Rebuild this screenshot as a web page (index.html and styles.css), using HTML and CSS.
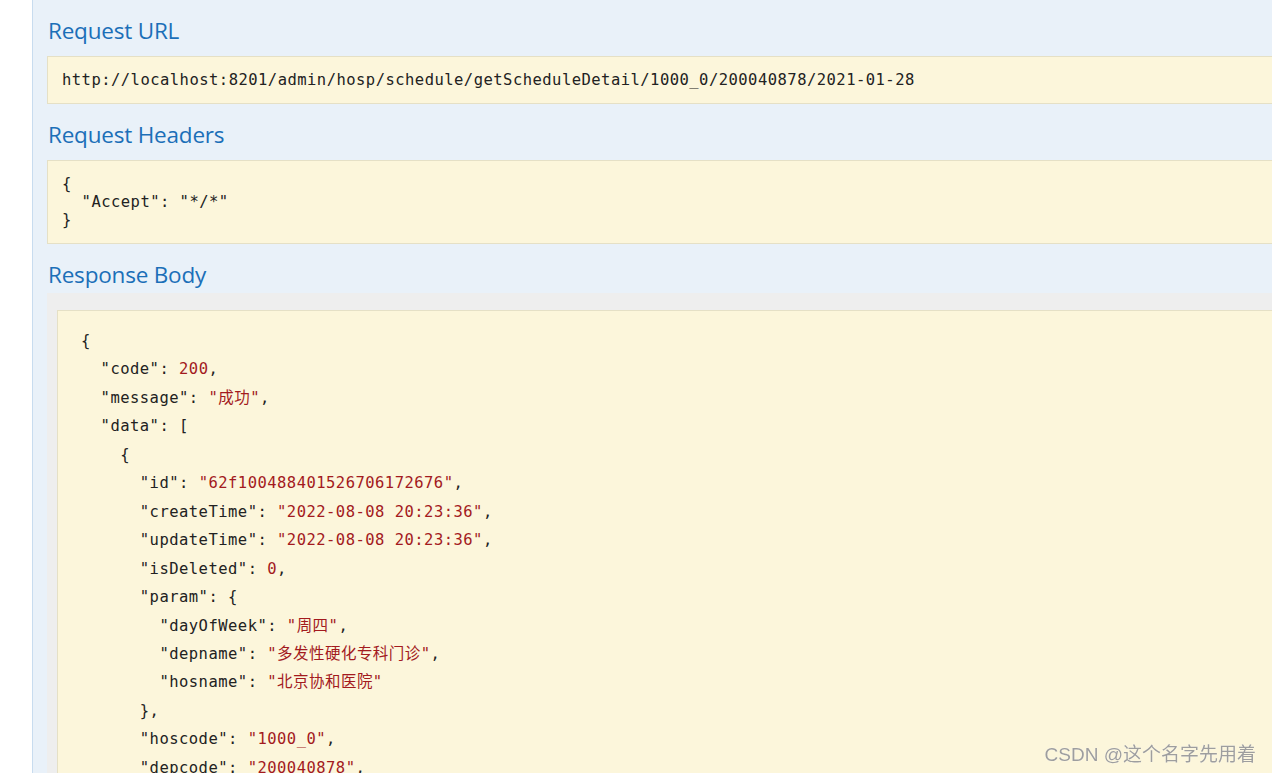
FILE: index.html
```html
<!DOCTYPE html>
<html lang="en">
<head>
  <meta charset="UTF-8">
  <title>getScheduleDetail</title>
  <link rel="stylesheet" href="styles.css">
</head>
<body>
  <div class="page">
    <div class="gutter"></div>
    <div class="response-panel">
      <h4 class="section-title">Request URL</h4>
      <pre class="code-block">http://localhost:8201/admin/hosp/schedule/getScheduleDetail/1000_0/200040878/2021-01-28</pre>

      <h4 class="section-title">Request Headers</h4>
      <pre class="code-block">{
  "Accept": "*/*"
}</pre>

      <h4 class="section-title title-body">Response Body</h4>
      <div class="body-wrap">
        <pre class="code-block body-code">{
  "code": <span class="val">200</span>,
  "message": <span class="val">"成功"</span>,
  "data": [
    {
      "id": <span class="val">"62f100488401526706172676"</span>,
      "createTime": <span class="val">"2022-08-08 20:23:36"</span>,
      "updateTime": <span class="val">"2022-08-08 20:23:36"</span>,
      "isDeleted": <span class="val">0</span>,
      "param": {
        "dayOfWeek": <span class="val">"周四"</span>,
        "depname": <span class="val">"多发性硬化专科门诊"</span>,
        "hosname": <span class="val">"北京协和医院"</span>
      },
      "hoscode": <span class="val">"1000_0"</span>,
      "depcode": <span class="val">"200040878"</span>,</pre>
      </div>
    </div>
  </div>

  <div class="watermark">CSDN @这个名字先用着</div>
</body>
</html>
```

FILE: styles.css
```css
* {
  margin: 0;
  padding: 0;
  box-sizing: border-box;
}

body {
  width: 1272px;
  height: 773px;
  overflow: hidden;
  background: #fff;
  font-family: "Open Sans", "Noto Sans", sans-serif;
  color: #333;
}

.page {
  display: flex;
  height: 100%;
}

.gutter {
  width: 32px;
  flex-shrink: 0;
}

.response-panel {
  width: 1300px;
  flex-shrink: 0;
  background: #e9f1f9;
  border-left: 1px solid #c8dcef;
  padding: 16px 0 0 14px;
}

.section-title {
  font-size: 22.5px;
  font-weight: 400;
  line-height: 30px;
  color: #1b6fb8;
  margin: 0 0 10px 1px;
  letter-spacing: -0.2px;
}

/* request url / headers boxes */
.code-block {
  background: #fcf6db;
  border: 1px solid #e5e0c6;
  padding: 14px 14px;
  margin-bottom: 16px;
  font-family: "DejaVu Sans Mono", "Noto Sans CJK SC", monospace;
  font-size: 15.5px;
  letter-spacing: 0.47px;
  line-height: 18px;
  color: #222;
  white-space: pre;
}

.title-body {
  margin-bottom: 3px;
}

.body-wrap {
  background: #eeeeee;
  padding: 17px 0 0 10px;
  height: 500px;
}

.body-code {
  padding: 16px 23px;
  line-height: 28.45px;
  height: 500px;
  margin: 0;
}

.val {
  color: #a31a1e;
}

.watermark {
  position: fixed;
  right: 16px;
  bottom: 7px;
  font-family: "Liberation Sans", "Noto Sans CJK SC", sans-serif;
  font-size: 19px;
  color: #9e9e9e;
  text-shadow: 0 0 1px #fff;
}
```
